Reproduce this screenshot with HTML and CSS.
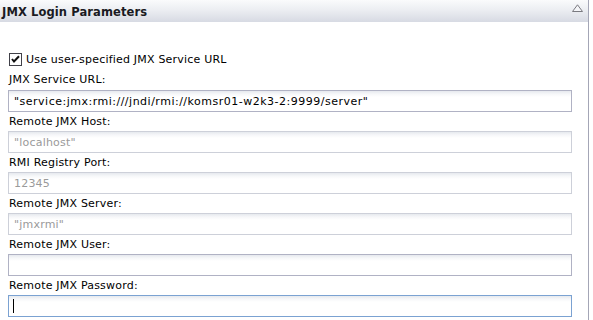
FILE: index.html
```html
<!DOCTYPE html>
<html>
<head>
<meta charset="utf-8">
<link rel="stylesheet" href="styles.css">
</head>
<body>
<div class="panel">
  <div class="header">
    <span class="title">JMX Login Parameters</span>
    <svg class="collapse" width="11" height="8" viewBox="0 0 11 8"><path d="M0.5 7.5 L5.5 0.8 L10.5 7.5 Z" fill="#f4f5f8" stroke="#7a7a80" stroke-width="1"/></svg>
  </div>
  <div class="content">
    <div class="check-row">
      <span class="checkbox">
        <svg width="13" height="13" viewBox="0 0 13 13"><rect x="0.5" y="0.5" width="12" height="12" fill="#fff" stroke="#404048"/><path d="M3 6 L5 8.5 L10 3.2" fill="none" stroke="#111" stroke-width="2"/></svg>
      </span>
      <span class="check-label">Use user-specified JMX Service URL</span>
    </div>
    <div class="label">JMX Service URL:</div>
    <div class="box active">"service:jmx:rmi:///jndi/rmi://komsr01-w2k3-2:9999/server"</div>
    <div class="label">Remote JMX Host:</div>
    <div class="box disabled">"localhost"</div>
    <div class="label">RMI Registry Port:</div>
    <div class="box disabled">12345</div>
    <div class="label">Remote JMX Server:</div>
    <div class="box disabled">"jmxrmi"</div>
    <div class="label">Remote JMX User:</div>
    <div class="box active"></div>
    <div class="label">Remote JMX Password:</div>
    <div class="box focused"><span class="caret"></span></div>
  </div>
</div>
</body>
</html>
```

FILE: styles.css
```css
html, body {
  margin: 0;
  padding: 0;
  background: #fff;
}
body {
  font-family: "DejaVu Sans", sans-serif;
  font-size: 11px;
  letter-spacing: 0.2px;
  color: #000;
}
.panel {
  width: 588px;
  height: 320px;
  border-right: 1px solid #a4a6b6;
  box-sizing: content-box;
  overflow: hidden;
}
.header {
  height: 22px;
  background: linear-gradient(to bottom, #fafbfc 0%, #eceef2 45%, #d7dae3 100%);
  display: flex;
  align-items: center;
  justify-content: space-between;
  padding: 0 5px 0 2px;
}
.title {
  font-weight: bold;
  font-size: 11.5px;
  letter-spacing: 0.1px;
  color: #1a1a22;
  padding-top: 1px;
}
.collapse {
  margin-bottom: 7px;
}
.content {
  padding: 30px 16px 0 8px;
}
.check-row {
  display: flex;
  align-items: center;
  height: 14px;
}
.checkbox {
  width: 13px;
  height: 13px;
  margin-left: 1px;
  display: flex;
}
.check-label {
  margin-left: 4px;
}
.label {
  height: 19px;
  line-height: 14px;
  padding-top: 3px;
  padding-left: 1px;
  box-sizing: border-box;
}
.check-row + .label {
  margin-top: 5px;
  padding-top: 2px;
}
.box {
  height: 22px;
  box-sizing: border-box;
  border: 1px solid #b0b2c4;
  background: linear-gradient(to bottom, #e6e9ee 0px, #f6f7f9 3px, #fff 6px);
  padding-left: 5px;
  line-height: 21px;
  white-space: nowrap;
  position: relative;
}
.box.active {
  letter-spacing: 0.5px;
}
.box.disabled {
  border-color: #cdd0d9;
  color: #9a9a9a;
}
.box.focused {
  border-color: #7ba2d2;
}
.caret {
  position: absolute;
  left: 4px;
  top: 3px;
  width: 1px;
  height: 14px;
  background: #000;
}
```
